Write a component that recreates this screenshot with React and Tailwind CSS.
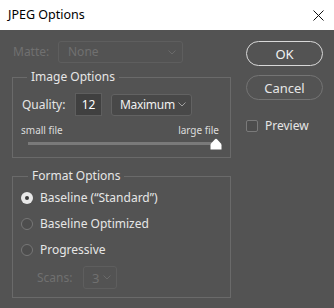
import React from "react";

const Chevron = ({ color }) => (
  <svg width="8" height="5" viewBox="0 0 8 5" fill="none">
    <path d="M0.5 0.5L4 4L7.5 0.5" stroke={color} strokeWidth="1" />
  </svg>
);

const Radio = ({ checked, label }) => (
  <div className="flex items-center h-[26px]">
    {checked ? (
      <div className="w-[12px] h-[12px] rounded-full bg-[#e8e8e8] flex items-center justify-center">
        <div className="w-[4px] h-[4px] rounded-full bg-[#3a3a3a]" />
      </div>
    ) : (
      <div className="w-[12px] h-[12px] rounded-full border border-[#777777] bg-[#4d4d4d]" />
    )}
    <span className="ml-[7px] text-[#e6e6e6]">{label}</span>
  </div>
);

const App = () => {
  return (
    <div
      className="w-[334px] h-[308px] flex flex-col text-[12px] leading-[16px] overflow-hidden"
      style={{ fontFamily: '"Noto Sans", "Open Sans", sans-serif' }}
    >
      <div className="h-[30px] bg-white flex items-center justify-between pl-[8px] pr-[10px]">
        <span className="text-[12.5px] text-black">JPEG Options</span>
        <svg width="11" height="11" viewBox="0 0 11 11" fill="none">
          <path d="M0.5 0.5L10.5 10.5M10.5 0.5L0.5 10.5" stroke="#111" strokeWidth="1" />
        </svg>
      </div>

      <div className="flex-1 bg-[#535353] flex pl-[12px] pt-[11px] gap-[15px]">
        {/* left column */}
        <div className="w-[219px] flex flex-col">
          <div className="flex items-center h-[22px]">
            <span className="text-[#707070] w-[46px] pl-[1px]">Matte:</span>
            <div className="w-[125px] h-[22px] border border-[#5e5e5e] rounded-[3px] flex items-center justify-between pl-[9px] pr-[6px]">
              <span className="text-[#707070]">None</span>
              <Chevron color="#6a6a6a" />
            </div>
          </div>

          <fieldset className="mt-[6px] border border-[#6a6a6a] h-[89px] px-0">
            <legend className="ml-[14px] px-[4px] text-[#e6e6e6] leading-[16px]">
              Image Options
            </legend>
            <div className="flex items-center mt-[8px] pl-[9px] h-[23px]">
              <span className="text-[#e6e6e6] w-[53px]">Quality:</span>
              <div className="w-[27px] h-[23px] bg-[#404040] border border-[#5e5e5e] flex items-center justify-center text-white">
                12
              </div>
              <div className="ml-[9px] w-[81px] h-[22px] bg-[#484848] border border-[#626262] rounded-[3px] flex items-center justify-between pl-[8px] pr-[5px]">
                <span className="text-[#f0f0f0] tracking-[-0.3px]">Maximum</span>
                <Chevron color="#a0a0a0" />
              </div>
            </div>
            <div className="flex justify-between mt-[8px] pl-[8px] pr-[11px] text-[10px] leading-[12px] text-[#dcdcdc]">
              <span>small file</span>
              <span>large file</span>
            </div>
            <div className="relative mt-[1px] ml-[15px] w-[191px] h-[13px] flex items-center">
              <div className="w-full h-[3px] bg-[#7a7a7a]" />
              <svg className="absolute right-[-3px] top-[1px]" width="12" height="12" viewBox="0 0 12 12">
                <path
                  d="M0.5 11.5L0.5 7.2Q0.5 6.2 1.3 5.3L4.8 1.4Q6 0.2 7.2 1.4L10.7 5.3Q11.5 6.2 11.5 7.2L11.5 11.5Z"
                  fill="#ffffff"
                />
              </svg>
            </div>
          </fieldset>

          <fieldset className="mt-[10px] border border-[#6a6a6a] h-[130px] px-0">
            <legend className="ml-[15px] px-[4px] text-[#e6e6e6] leading-[16px]">
              Format Options
            </legend>
            <div className="pl-[8px] mt-[1px] flex flex-col">
              <Radio checked label={"Baseline (\u201CStandard\u201D)"} />
              <Radio label="Baseline Optimized" />
              <Radio label="Progressive" />
              <div className="flex items-center mt-[3px] pl-[16px] h-[23px]">
                <span className="text-[#707070] w-[46px]">Scans:</span>
                <div className="w-[34px] h-[23px] border border-[#5e5e5e] rounded-[3px] flex items-center justify-between pl-[8px] pr-[5px]">
                  <span className="text-[#707070] text-[13px]">3</span>
                  <Chevron color="#6a6a6a" />
                </div>
              </div>
            </div>
          </fieldset>
        </div>

        {/* right column */}
        <div className="w-[77px] flex flex-col">
          <button className="h-[25px] rounded-full border-[1.5px] border-[#d8d8d8] text-[#f2f2f2] text-[13px]">
            OK
          </button>
          <button className="mt-[9px] h-[25px] rounded-full border border-[#747474] text-[#e6e6e6] text-[13px]">
            Cancel
          </button>
          <div className="flex items-center mt-[18px]">
            <div className="w-[12px] h-[12px] rounded-[2px] border border-[#7a7a7a] bg-[#4d4d4d]" />
            <span className="ml-[7px] text-[#e6e6e6]">Preview</span>
          </div>
        </div>
      </div>
    </div>
  );
};

export default App;
